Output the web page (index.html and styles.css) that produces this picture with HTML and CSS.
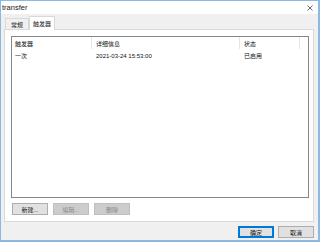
FILE: index.html
```html
<!DOCTYPE html>
<html lang="zh-CN">
<head>
  <meta charset="UTF-8" />
  <title>transfer</title>
  <link rel="stylesheet" href="styles.css">
</head>
<body>
  <div class="window">
    <div class="titlebar">
      <span class="title">transfer</span>
      <svg class="close" width="6" height="6" viewBox="0 0 6 6">
        <path d="M0.5 0.5 L5.5 5.5 M5.5 0.5 L0.5 5.5" stroke="#444" stroke-width="0.8" fill="none" />
      </svg>
    </div>
    <div class="dialog">
      <div class="tabs">
        <div class="tab">常规</div>
        <div class="tab active">触发器</div>
      </div>
      <div class="panel">
        <div class="listbox">
          <div class="row header">
            <div class="col c1">触发器</div>
            <div class="col c2">详细信息</div>
            <div class="col c3">状态</div>
            <div class="col c4"></div>
          </div>
          <div class="row">
            <div class="cell c1">一次</div>
            <div class="cell c2">2021-03-24 15:53:00</div>
            <div class="cell c3">已启用</div>
          </div>
        </div>
        <div class="list-actions">
          <button class="btn">新建...</button>
          <button class="btn" disabled>编辑...</button>
          <button class="btn" disabled>删除</button>
        </div>
      </div>
      <div class="footer">
        <button class="btn default">确定</button>
        <button class="btn">取消</button>
      </div>
    </div>
  </div>
</body>
</html>
```
FILE: styles.css
```css
* {
  box-sizing: border-box;
  font-family: "Liberation Sans", "Noto Sans CJK SC", sans-serif;
}

body {
  margin: 0;
  padding: 0;
  background: #fff;
}

.window {
  width: 320px;
  height: 242px;
  border: 1px solid #8db8e2;
  border-right-width: 2px;
  border-bottom-width: 2px;
  display: flex;
  flex-direction: column;
  background: #f0f0f0;
}

.titlebar {
  height: 13px;
  background: #fff;
  display: flex;
  align-items: center;
  justify-content: space-between;
  padding: 0 5px 0 1px;
}

.title {
  font-size: 7.5px;
  color: #222;
}

.dialog {
  flex: 1;
  display: flex;
  flex-direction: column;
  padding: 1px 4px 0 3px;
}

.tabs {
  display: flex;
  align-items: flex-end;
  height: 14px;
  padding-left: 1px;
}

.tab {
  height: 11px;
  width: 24px;
  border: 1px solid #d9d9d9;
  border-bottom: none;
  background: #f0f0f0;
  font-size: 6px;
  color: #222;
  display: flex;
  align-items: center;
  justify-content: center;
}

.tab.active {
  height: 14px;
  width: 26px;
  margin-bottom: -1px;
  background: #fff;
  position: relative;
  z-index: 1;
}

.panel {
  height: 193px;
  border: 1px solid #d9d9d9;
  background: #fff;
  display: flex;
  flex-direction: column;
  padding: 6px 4px 0 6px;
}

.listbox {
  height: 162px;
  border: 1px solid #828790;
  background: #fff;
}

.row {
  display: flex;
  height: 11px;
  align-items: center;
  font-size: 6px;
  color: #111;
}

.row.header {
  height: 12px;
  margin-bottom: 1px;
}

.col,
.cell {
  padding-left: 3px;
  white-space: nowrap;
  height: 100%;
  display: flex;
  align-items: center;
}

.col {
  border-right: 1px solid #e5e5e5;
}

.c1 {
  width: 80px;
}

.c2 {
  width: 148px;
  padding-left: 4px;
}

.c3 {
  width: 60px;
  padding-left: 4px;
}

.c4 {
  border-right: none;
}

.list-actions {
  display: flex;
  gap: 5px;
  margin-top: 5px;
  padding-left: 1px;
}

.btn {
  width: 36px;
  height: 12px;
  padding: 0;
  border: 1px solid #adadad;
  background: #e1e1e1;
  font-size: 6px;
  color: #111;
}

.btn:disabled {
  background: #cccccc;
  border-color: #bfbfbf;
  color: #8a8a8a;
}

.btn.default {
  border: 1px solid #0078d7;
  box-shadow: inset 0 0 0 1px #0078d7;
}

.footer {
  display: flex;
  justify-content: flex-end;
  gap: 4px;
  margin-top: 4px;
}
```
